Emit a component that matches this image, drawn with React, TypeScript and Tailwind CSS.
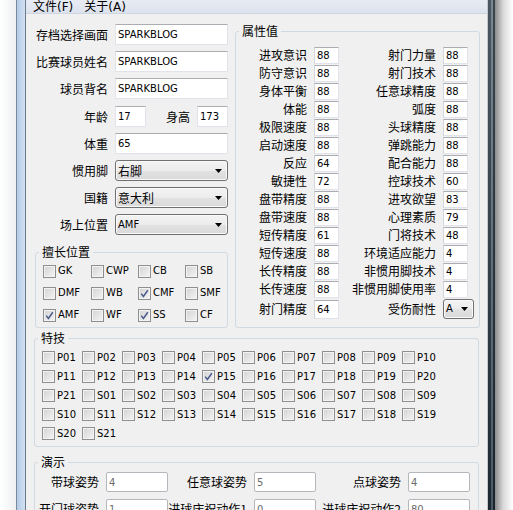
import React from 'react'

const cn = "font-['Noto_Sans_CJK_SC',sans-serif] text-[12px] leading-[14px] text-black"
const mix = "font-['DejaVu_Sans','Noto_Sans_CJK_SC',sans-serif] text-[12px] leading-[14px] text-black"
const lat = "font-['DejaVu_Sans',sans-serif] text-[10px] leading-[12px] text-black"
const group = 'rounded-[3px] border border-[#d0dae2]'
const legend = `${cn} ml-[3px] px-[3px]`

function Box({ checked = false }: { checked?: boolean }) {
  return (
    <span className="flex h-[13px] w-[13px] shrink-0 items-center justify-center border border-[#8e8f8f] bg-[linear-gradient(135deg,#d2d2d2,#f5f5f5)] shadow-[inset_0_0_0_1px_#f3f3f3]">
      {checked && (
        <svg viewBox="0 0 11 11" className="h-[11px] w-[11px]">
          <path d="M2.2 5.6 L4.4 8.4 L8.8 2.2" fill="none" stroke="#4b5c8c" strokeWidth="1.5" />
        </svg>
      )}
    </span>
  )
}

function Check({ text, checked, className = '' }: { text: string; checked?: boolean; className?: string }) {
  return (
    <label className={`flex items-center gap-[2px] ${className}`}>
      <Box checked={checked} />
      <span className={lat}>{text}</span>
    </label>
  )
}

function Arrow() {
  return (
    <svg viewBox="0 0 7 4" className="h-[4px] w-[7px]">
      <path d="M0 0 H7 L3.5 4 Z" fill="#000" />
    </svg>
  )
}

function Select({ value, className = '', latin = false }: { value: string; className?: string; latin?: boolean }) {
  return (
    <div
      className={`flex items-center justify-between rounded-[3px] border border-[#707070] bg-[linear-gradient(to_bottom,#f3f3f3_0%,#ececec_50%,#e2e2e2_51%,#d9d9d9_100%)] pl-[2px] pr-[5px] shadow-[inset_0_0_0_1px_#fafafa] ${className}`}
    >
      <span className={latin ? lat : cn}>{value}</span>
      <Arrow />
    </div>
  )
}

const textInput = `${lat} h-[21px] border border-[#e2e3ea] border-t-[#abadb3] bg-white pl-[2px] outline-none`
const smallInput = `${lat} h-[17px] w-[25px] border border-[#e2e3ea] border-t-[#abadb3] border-l-[#d4d6dd] bg-white pl-[2px] outline-none`

const attrs: [string, string, string, string][] = [
  ['进攻意识', '88', '射门力量', '88'],
  ['防守意识', '88', '射门技术', '88'],
  ['身体平衡', '88', '任意球精度', '88'],
  ['体能', '88', '弧度', '88'],
  ['极限速度', '88', '头球精度', '88'],
  ['启动速度', '88', '弹跳能力', '88'],
  ['反应', '64', '配合能力', '88'],
  ['敏捷性', '72', '控球技术', '60'],
  ['盘带精度', '88', '进攻欲望', '83'],
  ['盘带速度', '88', '心理素质', '79'],
  ['短传精度', '61', '门将技术', '48'],
  ['短传速度', '88', '环境适应能力', '4'],
  ['长传精度', '88', '非惯用脚技术', '4'],
  ['长传速度', '88', '非惯用脚使用率', '4'],
]

const skills = [
  ['P01', 'P02', 'P03', 'P04', 'P05', 'P06', 'P07', 'P08', 'P09', 'P10'],
  ['P11', 'P12', 'P13', 'P14', 'P15', 'P16', 'P17', 'P18', 'P19', 'P20'],
  ['P21', 'S01', 'S02', 'S03', 'S04', 'S05', 'S06', 'S07', 'S08', 'S09'],
  ['S10', 'S11', 'S12', 'S13', 'S14', 'S15', 'S16', 'S17', 'S18', 'S19'],
  ['S20', 'S21'],
]

const positions: [string, boolean][][] = [
  [['GK', false], ['CWP', false], ['CB', false], ['SB', false]],
  [['DMF', false], ['WB', false], ['CMF', true], ['SMF', false]],
  [['AMF', true], ['WF', false], ['SS', true], ['CF', false]],
]
const posWidths = ['w-[48px]', 'w-[47px]', 'w-[47px]', 'w-[40px]']

function DemoInput({ value }: { value: string }) {
  return (
    <input
      readOnly
      value={value}
      className="ml-[7px] h-[20px] w-[62px] rounded-[2px] border border-[#b5b7bd] bg-white pl-[2px] font-['DejaVu_Sans',sans-serif] text-[10px] text-[#6d6d6d] outline-none"
    />
  )
}

export default function App() {
  return (
    <div className="flex h-[510px] w-[513px] overflow-hidden bg-white">
      {/* left window edge */}
      <div className="w-[16px] bg-[linear-gradient(to_right,#ffffff,#eef0f2)]" />
      <div className="w-[1px] bg-[#7b8a9b]" />
      <div className="w-[8px] bg-[linear-gradient(to_right,#b3cbe7,#d2e1f2)]" />
      <div className="w-[1px] bg-[#6b7a8a]" />

      <main className="flex h-[510px] w-[461px] flex-col bg-[#f0f0f0]">
        {/* menu */}
        <div className="flex h-[14px] shrink-0 items-start gap-[11px] border-b border-[#cdd5e1] bg-[linear-gradient(to_bottom,#e7ebf3,#dde3ee)] pl-[7px]">
          <span className={`${mix} leading-[12px]`}>文件(F)</span>
          <span className={`${mix} leading-[12px]`}>关于(A)</span>
        </div>

        <div className="pl-[8px] pt-[10px]">
          <div className="flex items-stretch">
            {/* left column */}
            <div className="flex w-[201px] flex-col">
              <div className="flex h-[21px] items-center">
                <span className={`${cn} w-[74px] text-right`}>存档选择画面</span>
                <input readOnly value="SPARKBLOG" className={`${textInput} ml-[7px] w-[113px] border-[#a9c6e4] border-t-[#7fa8d2]`} />
              </div>
              <div className="mt-[6px] flex h-[21px] items-center">
                <span className={`${cn} w-[74px] text-right`}>比赛球员姓名</span>
                <input readOnly value="SPARKBLOG" className={`${textInput} ml-[7px] w-[113px]`} />
              </div>
              <div className="mt-[6px] flex h-[21px] items-center">
                <span className={`${cn} w-[74px] text-right`}>球员背名</span>
                <input readOnly value="SPARKBLOG" className={`${textInput} ml-[7px] w-[113px]`} />
              </div>
              <div className="mt-[7px] flex h-[21px] items-center">
                <span className={`${cn} w-[74px] text-right`}>年龄</span>
                <input readOnly value="17" className={`${textInput} ml-[7px] w-[31px]`} />
                <span className={`${cn} ml-[20px] w-[24px]`}>身高</span>
                <input readOnly value="173" className={`${textInput} ml-[7px] w-[31px]`} />
              </div>
              <div className="mt-[6px] flex h-[21px] items-center">
                <span className={`${cn} w-[74px] text-right`}>体重</span>
                <input readOnly value="65" className={`${textInput} ml-[7px] w-[113px]`} />
              </div>
              <div className="mt-[6px] flex h-[21px] items-center">
                <span className={`${cn} w-[74px] text-right`}>惯用脚</span>
                <Select value="右脚" className="ml-[7px] h-[21px] w-[113px]" />
              </div>
              <div className="mt-[6px] flex h-[21px] items-center">
                <span className={`${cn} w-[74px] text-right`}>国籍</span>
                <Select value="意大利" className="ml-[7px] h-[21px] w-[113px]" />
              </div>
              <div className="mt-[6px] flex h-[21px] items-center">
                <span className={`${cn} w-[74px] text-right`}>场上位置</span>
                <Select value="AMF" latin className="ml-[7px] h-[21px] w-[113px]" />
              </div>

              <fieldset className={`${group} ml-[1px] mt-[10px] w-[193px]`}>
                <legend className={legend}>擅长位置</legend>
                <div className="pb-[1px] pl-[7px] pt-[1px]">
                  {positions.map((row, i) => (
                    <div key={i} className="flex h-[22px] items-center">
                      {row.map(([t, c], j) => (
                        <Check key={t} text={t} checked={c} className={posWidths[j]} />
                      ))}
                    </div>
                  ))}
                </div>
              </fieldset>
            </div>

            {/* attributes */}
            <fieldset className={`${group} w-[245px]`}>
              <legend className={legend}>属性值</legend>
              <div className="pt-[8px]">
                {attrs.map(([a, av, b, bv]) => (
                  <div key={a} className="flex h-[18px] items-center">
                    <span className={`${cn} w-[71px] text-right`}>{a}</span>
                    <input readOnly value={av} className={`${smallInput} ml-[7px]`} />
                    <span className={`${cn} w-[97px] text-right`}>{b}</span>
                    <input readOnly value={bv} className={`${smallInput} ml-[7px]`} />
                  </div>
                ))}
                <div className="mt-[1px] flex h-[20px] items-center">
                  <span className={`${cn} w-[71px] text-right`}>射门精度</span>
                  <input readOnly value="64" className={`${smallInput} ml-[7px] h-[19px]`} />
                  <span className={`${cn} w-[97px] text-right`}>受伤耐性</span>
                  <Select value="A" latin className="ml-[7px] h-[20px] w-[31px]" />
                </div>
              </div>
            </fieldset>
          </div>

          {/* skills */}
          <fieldset className={`${group} mt-[3px] w-[445px]`}>
            <legend className={legend}>特技</legend>
            <div className="pb-[3px] pl-[7px] pt-[3px]">
              {skills.map((row, i) => (
                <div key={i} className="flex h-[19px] items-center">
                  {row.map((s) => (
                    <Check key={s} text={s} checked={s === 'P15'} className="w-[40px]" />
                  ))}
                </div>
              ))}
            </div>
          </fieldset>

          {/* demo */}
          <fieldset className={`${group} mt-[8px] w-[445px]`}>
            <legend className={legend}>演示</legend>
            <div className="pt-[3px]">
              <div className="flex h-[20px] items-center">
                <span className={`${cn} w-[64px] text-right`}>带球姿势</span>
                <DemoInput value="4" />
                <span className={`${cn} w-[79px] text-right`}>任意球姿势</span>
                <DemoInput value="5" />
                <span className={`${cn} w-[85px] text-right`}>点球姿势</span>
                <DemoInput value="4" />
              </div>
              <div className="mt-[7px] flex h-[20px] items-center">
                <span className={`${cn} w-[64px] text-right`}>开门球姿势</span>
                <DemoInput value="1" />
                <span className={`${cn} w-[79px] text-right`}>进球庆祝动作1</span>
                <DemoInput value="0" />
                <span className={`${cn} w-[85px] text-right`}>进球庆祝动作2</span>
                <DemoInput value="80" />
              </div>
            </div>
          </fieldset>
        </div>
      </main>

      {/* right window edge */}
      <div className="w-[1px] bg-[#c3c8cd]" />
      <div className="w-[3px] bg-[linear-gradient(to_bottom,#4a5762,#1d2932)]" />
      <div className="w-[2px] bg-[linear-gradient(to_bottom,#7a8690,#4c5962)]" />
      <div className="w-[2px] bg-[linear-gradient(to_bottom,#3a4650,#1a252d)]" />
      <div className="w-[18px] bg-[linear-gradient(to_right,#8a8a8a,#d8d8d8_45%,#ffffff)]" />
    </div>
  )
}
